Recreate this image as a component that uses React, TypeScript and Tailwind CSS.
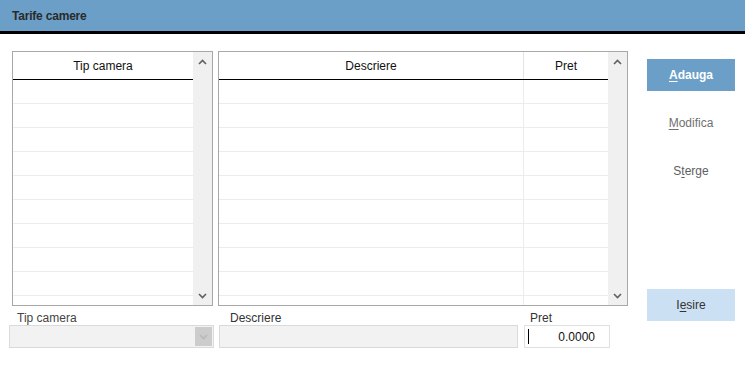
import React from "react";

const font = { fontFamily: '"Liberation Sans", Arial, sans-serif' };

function Chevron({ up = false, className = "" }: { up?: boolean; className?: string }) {
  return (
    <svg width="9" height="6" viewBox="0 0 9 6" className={className}>
      <path
        d={up ? "M1 5 L4.5 1.5 L8 5" : "M1 1 L4.5 4.5 L8 1"}
        fill="none"
        stroke="currentColor"
        strokeWidth="1.6"
      />
    </svg>
  );
}

function ScrollBar() {
  return (
    <div className="w-[19px] shrink-0 bg-[#f0f0f0] flex flex-col items-center justify-between pt-[7px] pb-[6px] text-[#606060]">
      <Chevron up />
      <Chevron />
    </div>
  );
}

const rows = Array.from({ length: 9 });

function LeftGrid() {
  return (
    <div className="w-[201px] h-[255px] border border-[#a8a8a8] flex bg-white">
      <div className="flex-1 flex flex-col overflow-hidden">
        <div className="h-[28px] shrink-0 border-b border-black flex items-center justify-center text-[12px] text-[#111]">
          Tip camera
        </div>
        {rows.map((_, i) => (
          <div key={i} className="h-[24px] shrink-0 border-b border-[#ececec]" />
        ))}
      </div>
      <ScrollBar />
    </div>
  );
}

function RightGrid() {
  return (
    <div className="w-[410px] h-[255px] border border-[#a8a8a8] flex bg-white">
      <div className="flex-1 flex flex-col overflow-hidden">
        <div className="h-[28px] shrink-0 border-b border-black flex text-[12px] text-[#111]">
          <div className="w-[305px] flex items-center justify-center border-r border-[#e4e4e4]">Descriere</div>
          <div className="flex-1 flex items-center justify-center">Pret</div>
        </div>
        {rows.map((_, i) => (
          <div key={i} className="h-[24px] shrink-0 border-b border-[#ececec] flex">
            <div className="w-[305px] border-r border-[#ececec]" />
            <div className="flex-1" />
          </div>
        ))}
        <div className="flex-1 flex">
          <div className="w-[305px] border-r border-[#ececec]" />
        </div>
      </div>
      <ScrollBar />
    </div>
  );
}

export default function App() {
  return (
    <div className="w-[745px] h-[373px] bg-white overflow-hidden" style={font}>
      <div className="h-[34px] bg-[#6b9fc7] border-b-[3px] border-black flex items-center pl-[12px]">
        <span className="text-[12px] font-bold text-[#2a2a2a] tracking-[-0.2px]">Tarife camere</span>
      </div>

      <div className="flex pt-[17px] pl-[12px]">
        <LeftGrid />
        <div className="ml-[5px]">
          <RightGrid />
        </div>
        <div className="ml-[19px] w-[88px] flex flex-col text-[12px]">
          <button className="mt-[8px] h-[32px] bg-[#6b9fc7] text-white font-bold">
            <span className="underline underline-offset-2">A</span>dauga
          </button>
          <button className="mt-[16px] h-[32px] text-[#707070]">
            <span className="underline underline-offset-2">M</span>odifica
          </button>
          <button className="mt-[16px] h-[32px] text-[#606060]">
            S<span className="underline underline-offset-2">t</span>erge
          </button>
          <button className="mt-[102px] h-[32px] bg-[#cce0f4] text-[#333]">
            I<span className="underline underline-offset-2">e</span>sire
          </button>
        </div>
      </div>

      <div className="flex pl-[9px] mt-[-14px] text-[12px]">
        <div className="w-[205px] flex flex-col">
          <span className="pl-[8px] h-[18px] flex items-end leading-[14px] text-[#444]">Tip camera</span>
          <div className="h-[23px] border border-[#dadada] bg-[#f2f2f2] flex justify-end items-center pr-[1px]">
            <div className="w-[17px] h-[19px] bg-[#cccccc] flex items-center justify-center text-[#b8b8b8]">
              <Chevron />
            </div>
          </div>
        </div>
        <div className="ml-[5px] w-[299px] flex flex-col">
          <span className="pl-[11px] h-[18px] flex items-end leading-[14px] text-[#333]">Descriere</span>
          <div className="h-[23px] border border-[#dadada] bg-[#f2f2f2]" />
        </div>
        <div className="ml-[6px] w-[86px] flex flex-col">
          <span className="pl-[6px] h-[18px] flex items-end leading-[14px] text-[#333]">Pret</span>
          <div className="h-[23px] border border-[#e0e0e0] bg-white flex items-center justify-between pl-[3px] pr-[14px]">
            <div className="w-px h-[15px] bg-black" />
            <span className="text-[#111]">0.0000</span>
          </div>
        </div>
      </div>
    </div>
  );
}
